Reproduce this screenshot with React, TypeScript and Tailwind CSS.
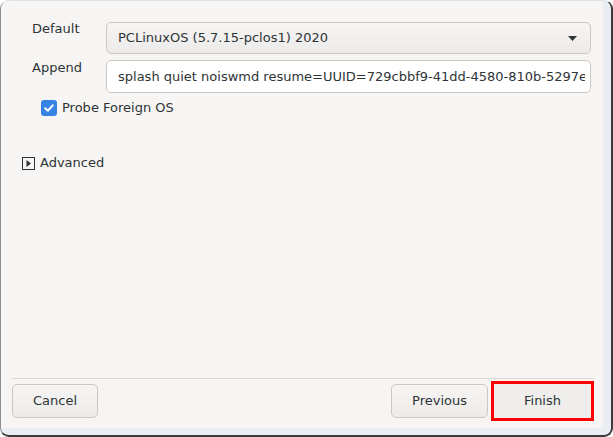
import React from 'react';

const font = { fontFamily: '"DejaVu Sans", "Liberation Sans", sans-serif' };

function Expander() {
  return (
    <svg width="13" height="13" viewBox="0 0 13 13" className="shrink-0">
      <rect x="0.5" y="0.5" width="12" height="12" fill="none" stroke="#2e3436" strokeWidth="1" />
      <path d="M4.5 3 L9 6.5 L4.5 10 Z" fill="#2e3436" />
    </svg>
  );
}

function Check() {
  return (
    <div className="w-4 h-4 rounded-[3px] bg-[#3584e4] flex items-center justify-center shrink-0">
      <svg width="12" height="12" viewBox="0 0 12 12">
        <path d="M2.2 6.3 L4.8 8.8 L9.8 3.4" fill="none" stroke="#fff" strokeWidth="2" strokeLinecap="round" strokeLinejoin="round" />
      </svg>
    </div>
  );
}

export default function App() {
  return (
    <div className="w-[613px] h-[437px] bg-white text-[13px] text-[#2e3436]" style={font}>
      <div className="w-full h-full rounded-[9px] bg-[#eaeef3] border-l border-t border-l-[#8d8f93] border-t-[#dde2e8] border-r-2 border-b-2 border-r-[#3a3a3a] border-b-[#3a3a3a] flex flex-col overflow-hidden">
        <div className="flex-1 mr-[8px] mb-[7px] bg-[#f6f5f4] rounded-tl-[8px] flex flex-col">
          {/* form */}
          <div className="flex-1 flex flex-col pt-[21px]">
            <div className="flex items-start">
              <div className="w-[105px] pl-[31px] leading-[16px] -mt-[1px]">Default</div>
              <div className="w-[485px] h-[32px] rounded-[5px] border border-[#cdc7c2] bg-gradient-to-b from-[#f6f5f4] to-[#edebe9] flex items-center pl-[11px] pr-[13px]">
                <span className="flex-1 leading-[16px]">PCLinuxOS (5.7.15-pclos1) 2020</span>
                <svg width="9" height="5" viewBox="0 0 9 5">
                  <path d="M0 0 L9 0 L4.5 5 Z" fill="#2e3436" />
                </svg>
              </div>
            </div>
            <div className="flex items-start mt-[6px]">
              <div className="w-[105px] pl-[31px] leading-[16px]">Append</div>
              <div className="w-[485px] h-[33px] rounded-[5px] border border-[#cdc7c2] bg-white flex items-center pl-[11px] pr-[5px]">
                <div className="w-[468px] overflow-hidden whitespace-nowrap leading-[16px]">
                  splash quiet noiswmd resume=UUID=729cbbf9-41dd-4580-810b-5297e4b1c2d3
                </div>
              </div>
            </div>
            <div className="flex items-center gap-[5px] pl-[40px] mt-[7px]">
              <Check />
              <span className="leading-[16px]">Probe Foreign OS</span>
            </div>
            <div className="flex items-center gap-[5px] pl-[21px] mt-[39px]">
              <Expander />
              <span className="leading-[16px]">Advanced</span>
            </div>
          </div>
          {/* buttons */}
          <div className="ml-[11px] mr-[10px] border-t border-[#dad7d3]" />
          <div className="flex items-center pl-[11px] pr-[12px] pt-[5px] pb-[10px]">
            <button className="w-[86px] h-[34px] rounded-[5px] border border-[#cdc7c2] bg-gradient-to-b from-[#f6f5f4] to-[#edebe9]">
              Cancel
            </button>
            <div className="flex-1" />
            <button className="w-[97px] h-[34px] rounded-[5px] border border-[#cdc7c2] bg-gradient-to-b from-[#f6f5f4] to-[#edebe9]">
              Previous
            </button>
            <button className="ml-[6px] w-[97px] h-[34px] bg-[#efeeec] outline-[3px] outline-solid outline-[#ff0000]">
              Finish
            </button>
          </div>
        </div>
      </div>
    </div>
  );
}
